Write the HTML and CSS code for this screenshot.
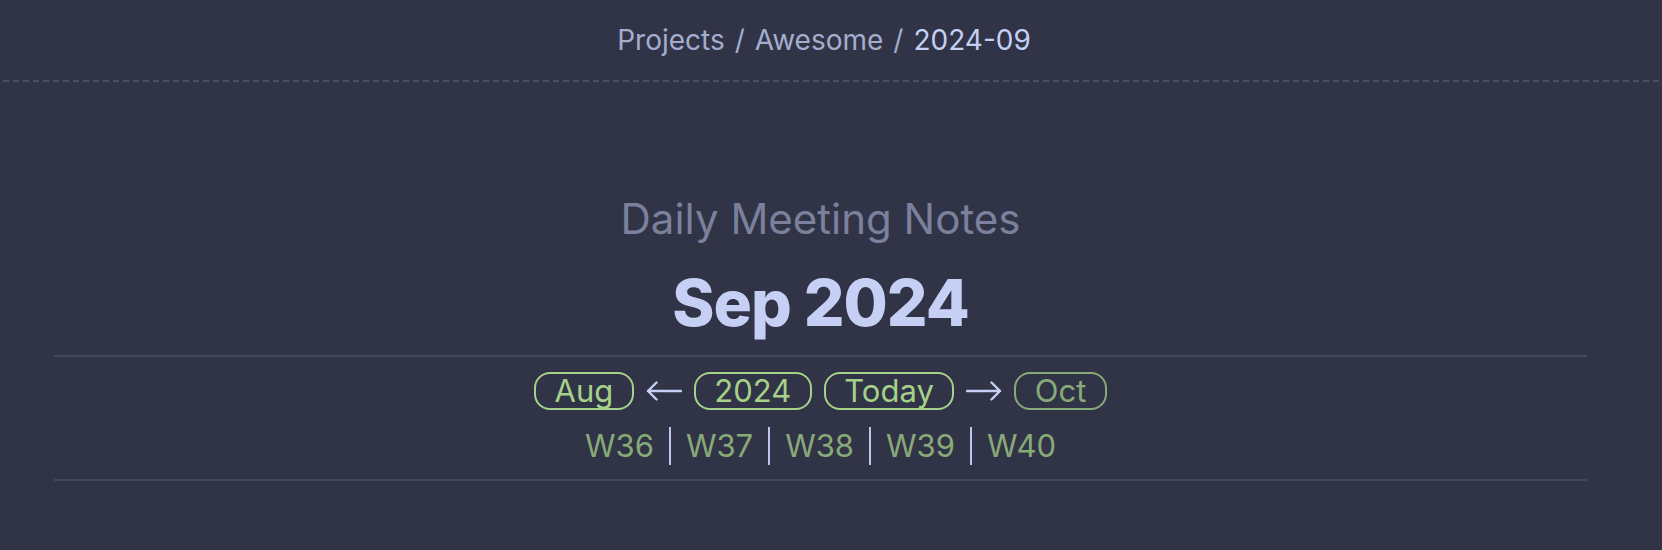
FILE: index.html
```html
<!DOCTYPE html>
<html lang="en">
<head>
<meta charset="utf-8">
<title>Daily Meeting Notes — Sep 2024</title>
<link rel="stylesheet" href="styles.css">
</head>
<body>
<header class="topbar">
  <nav class="crumbs">
    <span class="crumb">Projects</span>
    <span class="crumb-sep">/</span>
    <span class="crumb">Awesome</span>
    <span class="crumb-sep">/</span>
    <span class="crumb crumb-current">2024-09</span>
  </nav>
</header>
<div class="dash-rule"></div>
<main class="page">
  <div class="subtitle">Daily Meeting Notes</div>
  <h1 class="title">Sep 2024</h1>
  <section class="nav-block">
    <div class="pill-row">
      <span class="pill">Aug</span>
      <svg class="arrow" width="36" height="20" viewBox="0 0 36 20"><path d="M35 10H2M10.5 1.5L2 10l8.5 8.5" fill="none" stroke="currentColor" stroke-width="2.4" stroke-linecap="round" stroke-linejoin="round"/></svg>
      <span class="pill">2024</span>
      <span class="pill">Today</span>
      <svg class="arrow" width="36" height="20" viewBox="0 0 36 20"><path d="M1 10h33M25.5 1.5L34 10l-8.5 8.5" fill="none" stroke="currentColor" stroke-width="2.4" stroke-linecap="round" stroke-linejoin="round"/></svg>
      <span class="pill pill-muted">Oct</span>
    </div>
    <div class="week-row">
      <span class="week">W36</span><span class="bar"></span>
      <span class="week">W37</span><span class="bar"></span>
      <span class="week">W38</span><span class="bar"></span>
      <span class="week">W39</span><span class="bar"></span>
      <span class="week">W40</span>
    </div>
  </section>
</main>
</body>
</html>
```
FILE: styles.css
```css
* { box-sizing: border-box; }
html, body {
  margin: 0;
  padding: 0;
  background: #303446;
  height: 100%;
  overflow: hidden;
}
body {
  font-family: Inter, "Noto Sans", sans-serif;
  color: #c6d0f5;
}
.topbar {
  height: 80px;
  padding: 20px 14px 0 0;
  display: flex;
  justify-content: center;
}
.crumbs {
  display: flex;
  gap: 10px;
  font-size: 28px;
  line-height: 40px;
  height: 40px;
  color: #a5adce;
}
.crumb-current { color: #c6d0f5; }
.dash-rule {
  height: 2px;
  background: repeating-linear-gradient(to right, transparent 0 3px, #4a4f64 3px 9px, transparent 9px 10px);
}
.page {
  padding: 113px 75px 0 54px;
  display: flex;
  flex-direction: column;
  align-items: stretch;
  text-align: center;
}
.subtitle {
  font-size: 42px;
  line-height: 48px;
  color: #7b809c;
}
.title {
  margin: 24px 0 0;
  font-size: 64px;
  line-height: 72px;
  font-weight: 800;
  letter-spacing: -1px;
  color: #c6d0f5;
}
.nav-block {
  margin-top: 16px;
  border-top: 2px solid #45495d;
  border-bottom: 2px solid #45495d;
  padding: 15px 0 13px;
  display: flex;
  flex-direction: column;
  align-items: center;
  gap: 16px;
}
.pill-row {
  display: flex;
  align-items: center;
  gap: 12px;
  height: 38px;
}
.pill {
  display: inline-block;
  height: 38px;
  border: 2px solid #a6d189;
  border-radius: 16px;
  padding: 0 18.5px;
  font-size: 31px;
  line-height: 34px;
  color: #a6d189;
}
.pill-muted {
  border-color: #88aa78;
  color: #88aa78;
}
.arrow { color: #c6d0f5; display: block; }
.week-row {
  display: flex;
  align-items: center;
  height: 40px;
  font-size: 31px;
  line-height: 40px;
}
.week { color: #88aa78; }
.bar {
  width: 2px;
  height: 38px;
  margin: 0 15px;
  background: #c0c7ee;
}
```
